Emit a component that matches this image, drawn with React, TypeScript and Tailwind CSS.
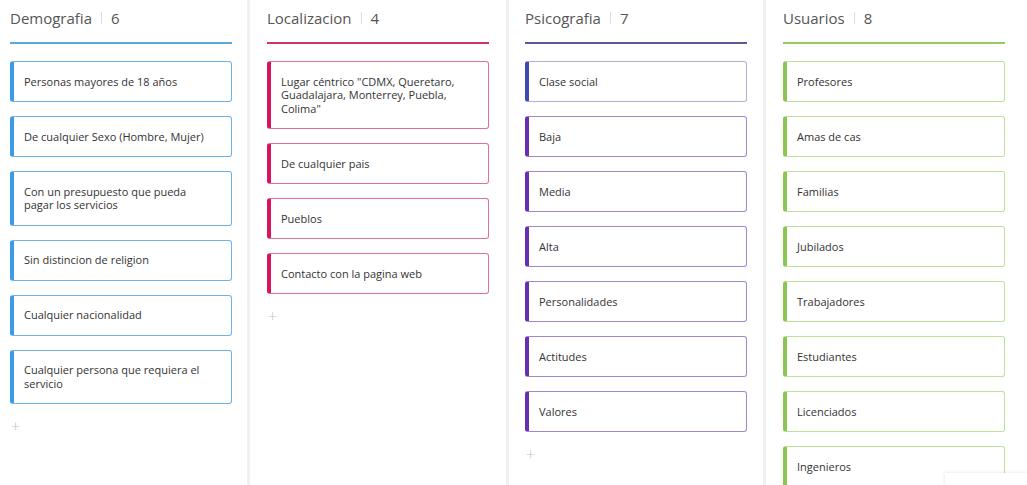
import React from 'react';

type Card = { text: string; accent?: string };

interface Column {
  title: string;
  line: string;
  bar: string;
  border: string;
  pad: string;
  cards: Card[];
}

const columns: Column[] = [
  {
    title: 'Demografia',
    line: 'bg-[#5aa9dc]',
    bar: 'border-l-[#3d9be6]',
    border: 'border-[#6db3ea]',
    pad: 'w-[247px] pl-[10px]',
    cards: [
      { text: 'Personas mayores de 18 años' },
      { text: 'De cualquier Sexo (Hombre, Mujer)' },
      { text: 'Con un presupuesto que pueda pagar los servicios' },
      { text: 'Sin distincion de religion' },
      { text: 'Cualquier nacionalidad' },
      { text: 'Cualquier persona que requiera el servicio' },
    ],
  },
  {
    title: 'Localizacion',
    line: 'bg-[#d3306f]',
    bar: 'border-l-[#d8135f]',
    border: 'border-[#e0709b]',
    pad: 'w-[256px] pl-[17px]',
    cards: [
      { text: 'Lugar céntrico "CDMX, Queretaro, Guadalajara, Monterrey, Puebla, Colima"' },
      { text: 'De cualquier pais' },
      { text: 'Pueblos' },
      { text: 'Contacto con la pagina web' },
    ],
  },
  {
    title: 'Psicografia',
    line: 'bg-[#5a5a96]',
    bar: 'border-l-[#6630b5]',
    border: 'border-[#a287cf]',
    pad: 'w-[254px] pl-[16px]',
    cards: [
      { text: 'Clase social', accent: 'indigo' },
      { text: 'Baja' },
      { text: 'Media' },
      { text: 'Alta' },
      { text: 'Personalidades' },
      { text: 'Actitudes' },
      { text: 'Valores' },
    ],
  },
  {
    title: 'Usuarios',
    line: 'bg-[#96cc5e]',
    bar: 'border-l-[#8bc653]',
    border: 'border-[#bfe09b]',
    pad: 'w-[261px] pl-[17px]',
    cards: [
      { text: 'Profesores' },
      { text: 'Amas de cas' },
      { text: 'Familias' },
      { text: 'Jubilados' },
      { text: 'Trabajadores' },
      { text: 'Estudiantes' },
      { text: 'Licenciados' },
      { text: 'Ingenieros' },
    ],
  },
];

const counts = [6, 4, 7, 8];

function Lane({ col, count }: { col: Column; count: number }) {
  return (
    <div className={`${col.pad} pr-[16px] shrink-0 bg-white h-full`}>
      <div className="h-[36px] flex items-center text-[15px] text-[#555]">
        <span>{col.title}</span>
        <span className="mx-[9px] w-px h-[12px] bg-[#ddd]" />
        <span>{count}</span>
      </div>
      <div className={`mt-[6px] h-[2px] w-[222px] ${col.line}`} />
      <div className="mt-[17px] flex flex-col gap-[14px] w-[222px]">
        {col.cards.map((c) => (
          <div
            key={c.text}
            className={`rounded-[3px] border border-l-[4px] pl-[10px] pr-[14px] py-[12.75px] text-[11px] leading-[13.5px] text-[#333] bg-white ${
              c.accent === 'indigo' ? 'border-[#aeb0d6] border-l-[#3f4aae]' : `${col.border} ${col.bar}`
            }`}
          >
            {c.text}
          </div>
        ))}
      </div>
      <div className="mt-[12px] pl-[1px] text-[16px] leading-[20px] text-[#c4c4c4] font-light">+</div>
    </div>
  );
}

export default function App() {
  return (
    <div
      className="relative w-[1027px] h-[485px] overflow-hidden bg-[#f0f0f0] flex gap-[3px]"
      style={{ fontFamily: '"Open Sans", "Noto Sans", sans-serif' }}
    >
      {columns.map((col, i) => (
        <Lane key={col.title} col={col} count={counts[i]} />
      ))}
      <div className="absolute left-[945px] top-[473px] w-[90px] h-[30px] bg-white shadow-[0_0_4px_rgba(0,0,0,0.12)]" />
    </div>
  );
}
